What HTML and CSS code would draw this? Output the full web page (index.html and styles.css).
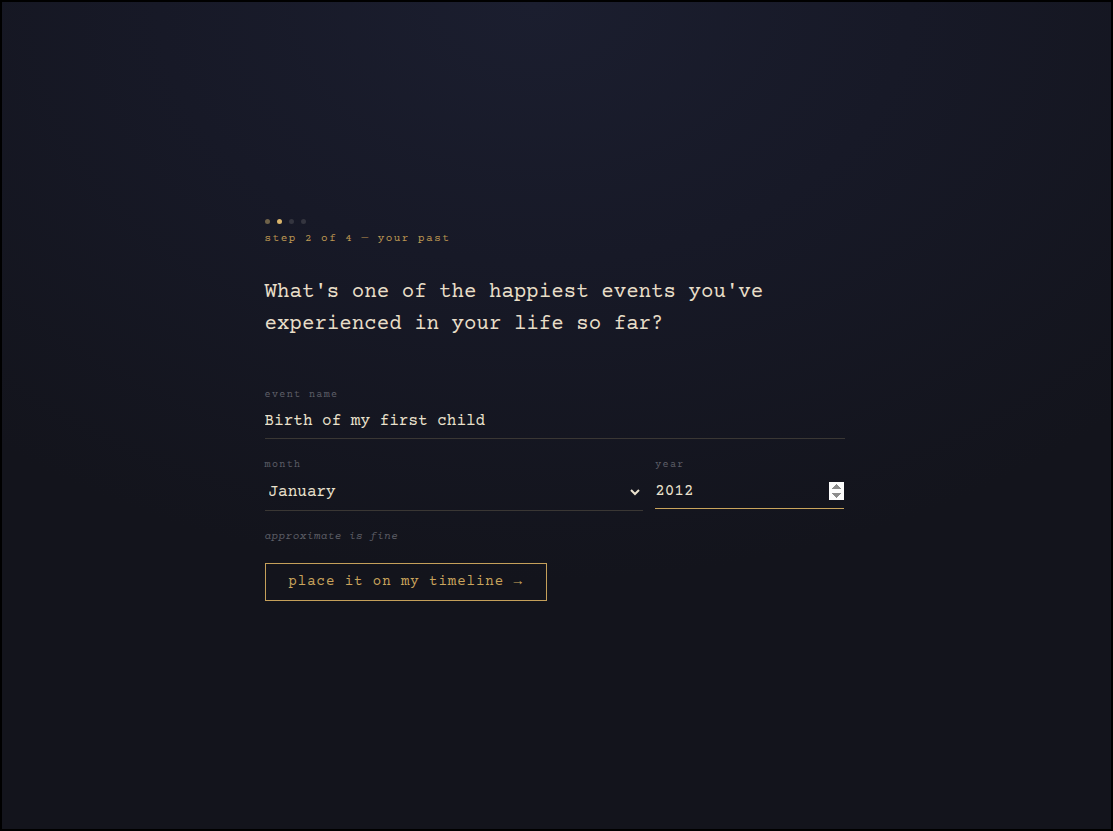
FILE: index.html
```html
<!DOCTYPE html>
<html lang="en">
<head>
<meta charset="utf-8">
<title>Your past</title>
<link rel="stylesheet" href="styles.css">
</head>
<body>
<main class="page">
  <section class="card">
    <div class="dots">
      <span class="dot dot-done"></span>
      <span class="dot dot-current"></span>
      <span class="dot"></span>
      <span class="dot"></span>
    </div>
    <p class="step">step 2 of 4 — your past</p>
    <h1 class="question">What's one of the happiest events you've experienced in your life so far?</h1>
    <form class="form">
      <label class="field">
        <span class="label">event name</span>
        <input class="input" type="text" value="Birth of my first child">
      </label>
      <div class="row">
        <label class="field">
          <span class="label">month</span>
          <select class="input select">
            <option selected>January</option>
            <option>February</option>
            <option>March</option>
          </select>
        </label>
        <label class="field">
          <span class="label">year</span>
          <input class="input year is-active" type="number" value="2012" autofocus>
        </label>
      </div>
      <p class="hint">approximate is fine</p>
      <button type="button" class="btn">place it on my timeline →</button>
    </form>
  </section>
</main>
</body>
</html>
```

FILE: styles.css
```css
html, body {
  margin: 0;
  padding: 0;
  height: 100%;
}

body {
  background: #14161f;
  font-family: "Courier Prime", "Courier New", Courier, "Nimbus Mono PS", "Liberation Mono", monospace;
}

.page {
  box-sizing: border-box;
  min-height: 100vh;
  border: 2px solid #000;
  background: radial-gradient(ellipse 75% 70% at 48% 0%, #1b1e2f 0%, #171927 45%, #13141c 100%);
  display: flex;
  align-items: center;
  justify-content: center;
}

.card {
  width: 580px;
  margin-left: -4px;
  margin-top: -12px;
}

.dots {
  display: flex;
  gap: 7px;
  padding-left: 0;
  margin-bottom: 7px;
}

.dot {
  width: 5px;
  height: 5px;
  border-radius: 50%;
  background: #34353f;
}

.dot-done {
  background: #6f6249;
}

.dot-current {
  background: #d8b36a;
}

.step {
  margin: 0 0 30px;
  font-size: 11px;
  line-height: 16px;
  letter-spacing: 0.135em;
  color: #bd9752;
}

.question {
  margin: 0 0 46px;
  font-size: 20.8px;
  line-height: 32px;
  font-weight: normal;
  color: #e8dec8;
  max-width: 520px;
}

.form {
  margin: 0;
}

.field {
  display: block;
  margin-bottom: 18px;
}

.label {
  display: block;
  font-size: 10px;
  line-height: 15px;
  letter-spacing: 0.14em;
  color: #5d5e67;
  margin-bottom: 2px;
}

.input {
  display: block;
  box-sizing: border-box;
  width: 100%;
  margin: 0;
  padding: 8px 0;
  font-family: "Courier Prime", "Courier New", Courier, "Nimbus Mono PS", "Liberation Mono", monospace;
  font-size: 16px;
  color: #ebe2ce;
  background: transparent;
  border: none;
  border-bottom: 1px solid #3a3734;
  border-radius: 0;
  outline: none;
}

.input.is-active,
.input:focus {
  border-bottom: 1px solid #c9a45c;
}

.select option {
  background: #1a1c28;
  color: #e8dfcb;
}

.row {
  display: grid;
  grid-template-columns: 2fr 1fr;
  gap: 12px;
}

.row .field {
  margin-bottom: 0;
}

.hint {
  margin: 18px 0 18px;
  font-size: 11px;
  line-height: 16px;
  letter-spacing: 0.04em;
  font-style: italic;
  color: #5d5e66;
}

.btn {
  font-family: "Courier Prime", "Courier New", Courier, "Nimbus Mono PS", "Liberation Mono", monospace;
  font-size: 14px;
  line-height: 16px;
  letter-spacing: 0.07em;
  color: #cba55d;
  background: transparent;
  border: 1px solid #c5a05a;
  border-radius: 0;
  padding: 10px 23px 10px 23px;
  cursor: pointer;
}
```
